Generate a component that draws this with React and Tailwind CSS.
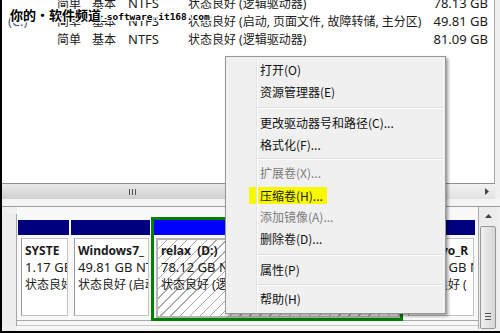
import React from "react";

const rows = [
  { drive: "", status: "状态良好 (逻辑驱动器)", size: "78.13 GB" },
  { drive: "(C:)", status: "状态良好 (启动, 页面文件, 故障转储, 主分区)", size: "49.81 GB" },
  { drive: "", status: "状态良好 (逻辑驱动器)", size: "81.09 GB" },
];

const menu = [
  { label: "打开(O)" },
  { label: "资源管理器(E)" },
  { sep: "h-[9px]" },
  { label: "更改驱动器号和路径(C)..." },
  { label: "格式化(F)..." },
  { sep: "h-[6px]" },
  { label: "扩展卷(X)...", off: true },
  { label: "压缩卷(H)...", mark: true },
  { label: "添加镜像(A)...", off: true },
  { label: "删除卷(D)..." },
  { sep: "h-[9px]" },
  { label: "属性(P)" },
  { sep: "h-[7px]" },
  { label: "帮助(H)" },
];

function Arrow({ dir }) {
  return (
    <svg width="7" height="7" viewBox="0 0 7 7">
      {dir === "right" ? (
        <path d="M2 0 L6 3.5 L2 7 Z" fill="#444" />
      ) : (
        <path d="M0 5 L3.5 1 L7 5 Z" fill="#444" />
      )}
    </svg>
  );
}

function PartBody({ name, size, status }) {
  return (
    <>
      <div className="h-[17px] leading-[17px] text-[12px] font-bold whitespace-pre">{name}</div>
      <div className="h-[17px] leading-[17px] text-[13px] whitespace-nowrap">{size}</div>
      <div className="h-[17px] leading-[17px] text-[12px] whitespace-nowrap">{status}</div>
    </>
  );
}

function Partition({ width, name, size, status }) {
  return (
    <div className={`flex flex-col shrink-0 pt-[3px] ${width}`}>
      <div className="h-[15px] bg-[#00007f]" />
      <div className="mt-[3px] ml-[3px] mr-[1px] h-[78px] overflow-hidden bg-white border border-[#c4c4c4] border-l-[#9a9a9a] pl-[3px] pt-[3px]">
        <PartBody name={name} size={size} status={status} />
      </div>
    </div>
  );
}

export default function App() {
  return (
    <div className="relative w-[500px] h-[333px] overflow-hidden bg-[#f0f0f0] border-l-2 border-b-2 border-black font-['Noto_Sans','Noto_Sans_CJK_SC',sans-serif] text-[#1b1b1b]">
      {/* volume list */}
      <div className="relative w-[493px] h-[183px] overflow-hidden bg-white border-r border-[#a8a8a8]">
        <div className="-mt-[5px]">
          {rows.map((r, i) => (
            <div key={i} className="flex h-[18px] items-center text-[13px] whitespace-nowrap">
              <div className="w-[55px] pl-[6px] text-[#55607a]">{r.drive}</div>
              <div className="w-[35px] text-[12px]">简单</div>
              <div className="w-[36px] text-[12px]">基本</div>
              <div className="w-[60px]">NTFS</div>
              <div className="flex-1 text-[12px]">{r.status}</div>
              <div className="pr-[6px]">{r.size}</div>
            </div>
          ))}
        </div>
        <div className="absolute left-[8px] top-[5px] text-[13px] font-bold text-black whitespace-nowrap font-['Noto_Sans_CJK_SC',sans-serif] [text-shadow:1px_0_0_#fff,-1px_0_0_#fff,0_1px_0_#fff,0_-1px_0_#fff,1px_1px_0_#fff,-1px_-1px_0_#fff,1px_-1px_0_#fff,-1px_1px_0_#fff]">
          你的・软件频道<span className="font-['DejaVu_Sans_Mono',monospace] text-[9.5px]">_software.it168.com</span>
        </div>
      </div>

      {/* horizontal scrollbar */}
      <div className="flex w-[493px] h-[16px] border-t border-[#8f8f8f] bg-gradient-to-b from-[#f2f2f2] to-[#e2e2e2]">
        <div className="flex w-[262px] items-center justify-center border-r border-[#9a9a9a] rounded-r-[2px] bg-gradient-to-b from-[#e8e8e8] via-[#dcdcdc] to-[#cfcfcf]">
          <div className="flex gap-[2px]">
            <div className="w-[1px] h-[6px] bg-[#555]" />
            <div className="w-[1px] h-[6px] bg-[#555]" />
            <div className="w-[1px] h-[6px] bg-[#555]" />
          </div>
        </div>
        <div className="flex-1" />
        <div className="flex w-[17px] items-center justify-center">
          <Arrow dir="right" />
        </div>
      </div>

      <div className="h-[8px] border-b border-[#9c9c9c] bg-[#f4f4f4]" />

      {/* disk map */}
      <div className="flex h-[122px]">
        <div className="w-[15px] mt-[7px] h-[112px] border-r border-[#a8a8a8] bg-[#ededed]" />
        <div className="w-[461px] bg-[#f8f8f8]">
          <div className="flex h-[114px] pt-[10px] pl-[1px] border-b border-[#a8a8a8]">
            <Partition width="w-[51px]" name="SYSTE" size="1.17 GB NTFS" status="状态良好" />
            <div className="ml-[2px]">
              <Partition width="w-[79px]" name="Windows7_" size="49.81 GB NTFS" status="状态良好 (启动" />
            </div>
            <div className="ml-[1px] flex flex-col w-[252px] h-[104px] border-[3px] border-[#008000]">
              <div className="h-[15px] bg-[#0000ff]" />
              <div className="mt-[3px] ml-[2px] flex-1 overflow-hidden border-2 border-[#b4b4b4] pl-[3px] pt-[2px] bg-[repeating-linear-gradient(135deg,#ffffff_0,#ffffff_6px,#a9a9a9_6px,#a9a9a9_7px)]">
                <PartBody name="relax  (D:)" size="78.12 GB NTFS" status="状态良好 (逻辑驱动器)" />
              </div>
            </div>
            <div className="ml-[2px]">
              <Partition width="w-[70px]" name="Lenovo_R" size="29.30 GB NTFS" status="状态良好 (" />
            </div>
          </div>
          <div className="h-[5px] border-b border-[#c8c8c8]" />
        </div>
        <div className="flex flex-col w-[19px] border-l border-[#a8a8a8] bg-[#ececec]">
          <div className="flex h-[18px] items-center justify-center">
            <Arrow dir="up" />
          </div>
          <div className="flex flex-1 flex-col justify-end items-center mx-[1px] mt-[1px] pb-[8px] rounded-[2px] border border-[#979797] bg-gradient-to-r from-[#f0f0f0] to-[#d6d6d6]">
            <div className="flex flex-col gap-[2px]">
              <div className="w-[6px] h-[1px] bg-[#555]" />
              <div className="w-[6px] h-[1px] bg-[#555]" />
              <div className="w-[6px] h-[1px] bg-[#555]" />
            </div>
          </div>
        </div>
      </div>

      {/* context menu */}
      <div className="absolute left-[223px] top-[56px] w-[221px] h-[258px] bg-[#f0f0f0] border border-[#979797] shadow-[2px_2px_3px_rgba(0,0,0,0.4)] py-[2px] font-['Noto_Sans_CJK_SC',sans-serif] text-[12px]">
        <div className="absolute left-[30px] top-[2px] bottom-[2px] w-[2px] border-l border-[#e2e3e3] border-r-white border-r" />
        {menu.map((m, i) =>
          m.sep ? (
            <div key={i} className={`flex items-center pl-[31px] pr-[2px] ${m.sep}`}>
              <div className="w-full h-[2px] border-t border-[#e0e0e0] border-b border-b-white" />
            </div>
          ) : (
            <div key={i} className="flex h-[22px] items-center pl-[34px]">
              {m.mark ? (
                <span className="-ml-[11px] pl-[11px] pr-[4px] h-[17px] leading-[17px] bg-[#f8f800]">{m.label}</span>
              ) : (
                <span className={m.off ? "text-[#7c7c7c]" : "text-[#111]"}>{m.label}</span>
              )}
            </div>
          )
        )}
      </div>
    </div>
  );
}
